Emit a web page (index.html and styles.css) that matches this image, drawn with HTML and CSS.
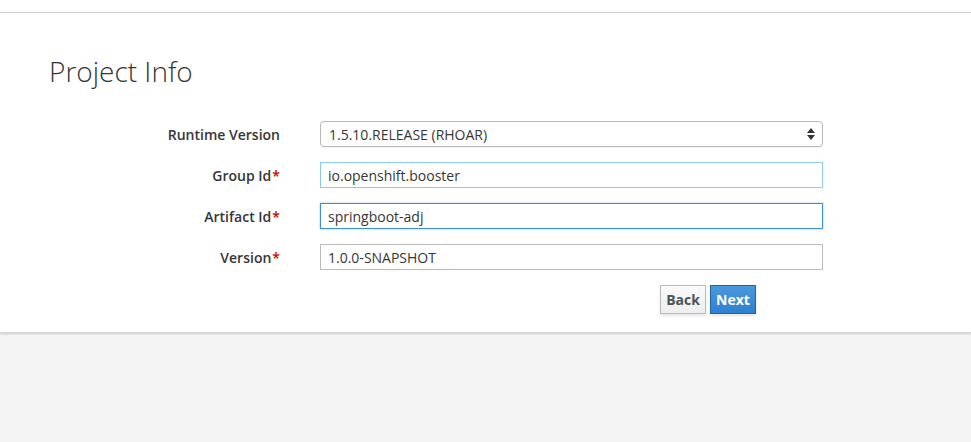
FILE: index.html
```html
<!DOCTYPE html>
<html>
<head>
<meta charset="utf-8">
<link rel="stylesheet" href="styles.css">
</head>
<body>
<div class="page">
  <div class="panel">
    <h1 class="title">Project Info</h1>
    <form class="form">
      <label class="label">Runtime Version</label>
      <div class="select">
        <span>1.5.10.RELEASE (RHOAR)</span>
        <svg class="arrows" width="8" height="12" viewBox="0 0 8 12"><path d="M4 0 L8 5 L0 5 Z M0 7 L8 7 L4 12 Z" fill="#333"/></svg>
      </div>
      <label class="label">Group Id<span class="req">*</span></label>
      <div class="input focus-light">io.openshift.booster</div>
      <label class="label">Artifact Id<span class="req">*</span></label>
      <div class="input focus">springboot-adj</div>
      <label class="label">Version<span class="req">*</span></label>
      <div class="input">1.0.0-SNAPSHOT</div>
      <div></div>
      <div class="actions">
        <button type="button" class="btn btn-default">Back</button>
        <button type="button" class="btn btn-primary">Next</button>
      </div>
    </form>
  </div>
</div>
</body>
</html>
```
FILE: styles.css
```css
html, body {
  margin: 0;
  padding: 0;
  height: 100%;
}
body {
  background: #f4f4f4;
  font-family: "Open Sans", "Liberation Sans", sans-serif;
  color: #363636;
  font-size: 14px;
}
.page {
  padding-top: 12px;
  background: #fff;
}
.panel {
  background: #fff;
  border-top: 1px solid #d1d1d1;
  box-shadow: 0 1px 2px rgba(0,0,0,0.18);
  border-bottom: 1px solid #d8d8d8;
  padding: 0 0 18px 0;
}
.title {
  margin: 0;
  padding: 41px 0 0 49px;
  font-weight: 300;
  font-size: 28px;
  line-height: 34px;
  color: #363636;
}
.form {
  display: grid;
  grid-template-columns: 280px 503px;
  column-gap: 40px;
  row-gap: 15px;
  margin-top: 33px;
  align-items: center;
}
.label {
  text-align: right;
  font-weight: 600;
  font-size: 14px;
  color: #363636;
}
.req {
  color: #cc0000;
  margin-left: 1px;
}
.select, .input {
  box-sizing: border-box;
  height: 26px;
  border: 1px solid #bbb;
  padding: 0 7px;
  display: flex;
  align-items: center;
  font-size: 14px;
  color: #363636;
  background: #fff;
}
.select {
  border-radius: 4px;
  border-color: #b9b9b9;
  justify-content: space-between;
  padding: 0 7px 0 8px;
  box-shadow: 0 1px 1px rgba(0,0,0,0.05);
}
.select .arrows {
  display: block;
}
.focus-light {
  border-color: #8ccbef;
}
.focus {
  border-color: #3e90d6;
  box-shadow: 0 0 2px rgba(62,144,214,0.5);
}
.actions {
  display: flex;
  justify-content: flex-end;
  gap: 4px;
  padding-right: 67px;
}
.btn {
  font-family: "Open Sans", "Liberation Sans", sans-serif;
  font-weight: 700;
  font-size: 14px;
  height: 29px;
  padding: 0;
  box-sizing: border-box;
  cursor: pointer;
  box-shadow: 0 2px 3px rgba(0,0,0,0.1);
}
.btn-default {
  width: 46px;
  color: #4d5258;
  background: linear-gradient(#fafafa, #ededed);
  border: 1px solid #bbb;
}
.btn-primary {
  width: 46px;
  color: #fff;
  background: linear-gradient(#4a98dc, #2f80cf);
  border: 1px solid #1f65a6;
}
```
